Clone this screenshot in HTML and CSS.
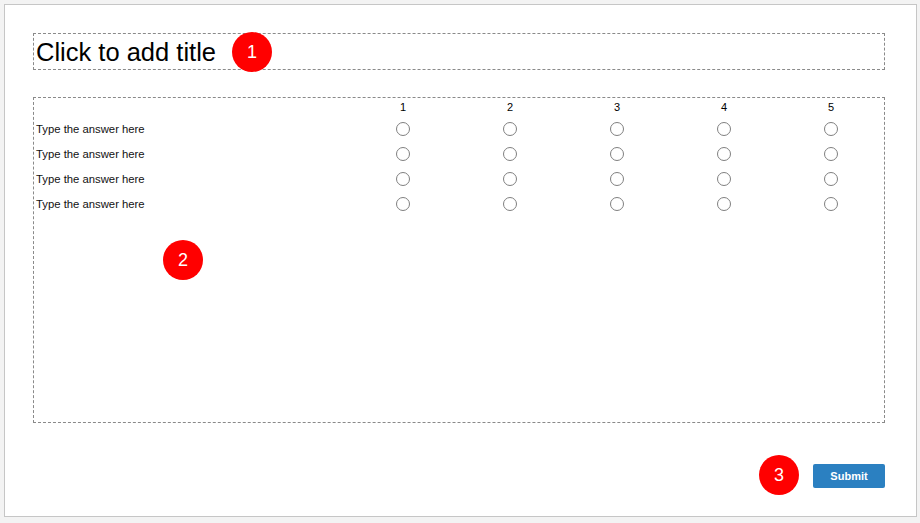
FILE: index.html
```html
<!DOCTYPE html>
<html>
<head>
<meta charset="utf-8">
<link rel="stylesheet" href="styles.css">
</head>
<body>
<div class="canvas">
  <div class="title-box">
    <span class="title-text">Click to add title</span>
  </div>
  <div class="survey-box">
    <div class="grid">
      <div class="head-label"></div>
      <div class="head-num">1</div>
      <div class="head-num">2</div>
      <div class="head-num">3</div>
      <div class="head-num">4</div>
      <div class="head-num">5</div>

      <div class="row-label">Type the answer here</div>
      <div class="cell"><span class="radio"></span></div>
      <div class="cell"><span class="radio"></span></div>
      <div class="cell"><span class="radio"></span></div>
      <div class="cell"><span class="radio"></span></div>
      <div class="cell"><span class="radio"></span></div>

      <div class="row-label">Type the answer here</div>
      <div class="cell"><span class="radio"></span></div>
      <div class="cell"><span class="radio"></span></div>
      <div class="cell"><span class="radio"></span></div>
      <div class="cell"><span class="radio"></span></div>
      <div class="cell"><span class="radio"></span></div>

      <div class="row-label">Type the answer here</div>
      <div class="cell"><span class="radio"></span></div>
      <div class="cell"><span class="radio"></span></div>
      <div class="cell"><span class="radio"></span></div>
      <div class="cell"><span class="radio"></span></div>
      <div class="cell"><span class="radio"></span></div>

      <div class="row-label">Type the answer here</div>
      <div class="cell"><span class="radio"></span></div>
      <div class="cell"><span class="radio"></span></div>
      <div class="cell"><span class="radio"></span></div>
      <div class="cell"><span class="radio"></span></div>
      <div class="cell"><span class="radio"></span></div>
    </div>
  </div>
  <div class="actions">
    <button class="submit">Submit</button>
  </div>

  <div class="badge badge-1">1</div>
  <div class="badge badge-2">2</div>
  <div class="badge badge-3">3</div>
</div>
</body>
</html>
```
FILE: styles.css
```css
html, body {
  margin: 0;
  padding: 0;
  background: #f3f3f3;
  font-family: "Liberation Sans", Arial, sans-serif;
  color: #000;
}

.canvas {
  position: relative;
  margin: 4px 0 0 4px;
  border: 1px solid #c6c6c6;
  background: #ffffff;
  padding: 28px 0 0 28px;
  box-sizing: content-box;
  width: 883px;
  height: 483px;
}

.title-box {
  height: 35px;
  border: 1px dashed #8a8a8a;
  display: flex;
  align-items: center;
  padding-left: 2px;
  box-sizing: content-box;
  width: 848px;
}

.title-text {
  font-size: 25.5px;
  line-height: 30px;
  margin-top: 1px;
}

.survey-box {
  margin-top: 27px;
  width: 850px;
  height: 324px;
  border: 1px dashed #8a8a8a;
}

.grid {
  display: grid;
  grid-template-columns: 315px repeat(5, 107px);
  grid-template-rows: 18px repeat(4, 25px);
  font-size: 11px;
}

.head-num {
  display: flex;
  align-items: center;
  justify-content: center;
  font-size: 11px;
  padding-left: 1px;
}

.row-label {
  display: flex;
  align-items: center;
  padding-left: 2px;
  font-size: 11.3px;
  color: #111;
}

.cell {
  display: flex;
  align-items: center;
  justify-content: center;
  padding-left: 1px;
}

.radio {
  display: block;
  width: 14px;
  height: 14px;
  box-sizing: border-box;
  border: 1px solid #7f7f7f;
  border-radius: 50%;
  background: #fff;
}

.actions {
  display: flex;
  justify-content: flex-end;
  width: 852px;
  margin-top: 41px;
}

.submit {
  width: 72px;
  height: 24px;
  border: none;
  border-radius: 2px;
  background: #2b80c1;
  color: #fff;
  font-family: "Liberation Sans", Arial, sans-serif;
  font-weight: bold;
  font-size: 11px;
  padding: 0;
}

.badge {
  position: absolute;
  width: 40px;
  height: 40px;
  border-radius: 50%;
  background: #ff0000;
  color: #fff;
  font-size: 18px;
  display: flex;
  align-items: center;
  justify-content: center;
}

.badge-1 { left: 227px; top: 27px; }
.badge-2 { left: 158px; top: 235px; }
.badge-3 { left: 754px; top: 450px; }
```
